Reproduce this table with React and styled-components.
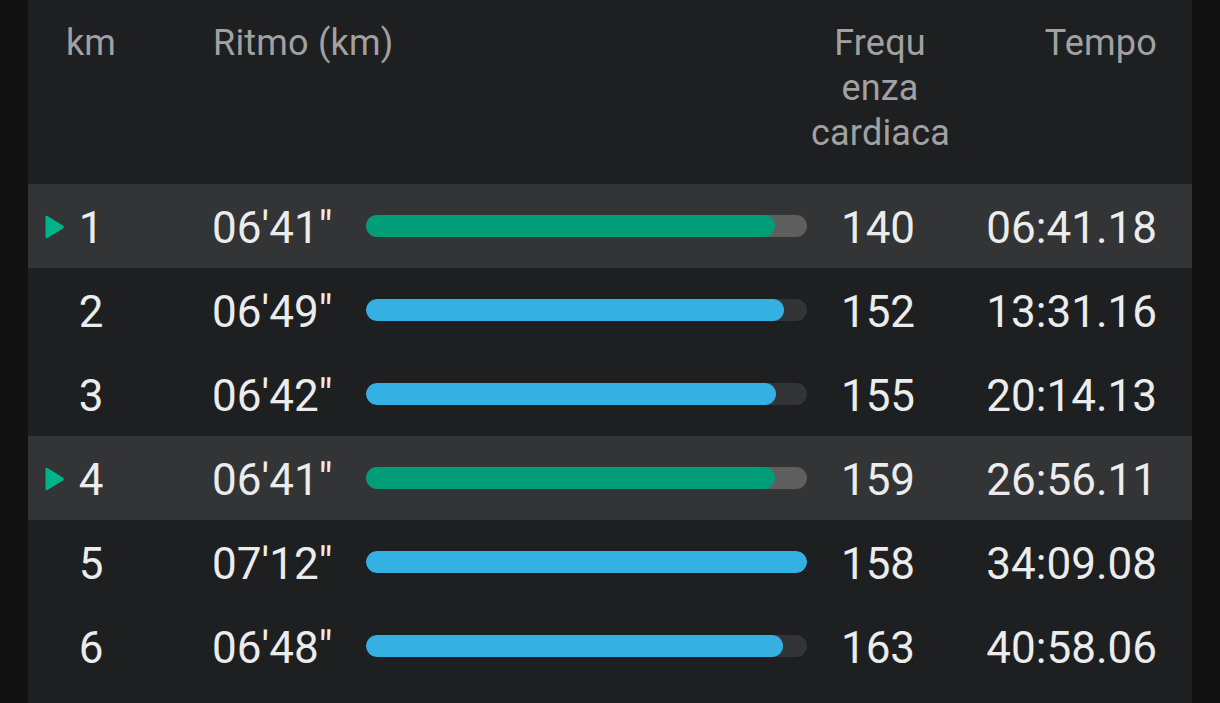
import styled, { createGlobalStyle } from 'styled-components';

const GlobalStyle = createGlobalStyle`
  html, body {
    margin: 0;
    padding: 0;
    background: #121212;
    height: 100%;
    overflow: hidden;
  }
  body {
    font-family: Roboto, "Noto Sans", sans-serif;
  }
`;

const Panel = styled.div`
  margin: 0 28px;
  min-height: 100vh;
  background: #1e1f21;
`;

const COLUMNS = '34px 58px 246px 441px 142px 1fr';

const HeaderRow = styled.div`
  display: grid;
  grid-template-columns: ${COLUMNS};
  height: 184px;
  box-sizing: border-box;
  padding: 21px 35px 0 0;
  color: #a1a1a1;
  font-size: 36px;
  line-height: 45px;
  letter-spacing: 0.2px;
`;

const HeadCell = styled.div`
  grid-column: ${p => p.$col};
  text-align: ${p => p.$align || 'left'};
  padding-left: ${p => p.$pad || 0}px;
  white-space: nowrap;
`;

const Row = styled.div`
  display: grid;
  grid-template-columns: ${COLUMNS};
  align-items: center;
  height: 84px;
  padding-right: 35px;
  background: ${p => (p.$active ? '#333436' : 'transparent')};
  color: #ececec;
  font-size: 44px;
`;

const Marker = styled.div`
  display: flex;
  align-items: center;
  padding-left: 17px;
  padding-top: 2px;
  overflow: visible;

  svg {
    display: block;
    flex: 0 0 19px;
    width: 19px;
    height: 24px;
  }
`;

const Km = styled.div`
  text-align: center;
  padding-top: 4px;
`;

const Pace = styled.div`
  padding-left: 92px;
  padding-top: 4px;
`;

const Track = styled.div`
  height: 22px;
  border-radius: 11px;
  background: ${p => (p.$active ? '#5f5f5f' : '#333437')};
  overflow: hidden;
`;

const Fill = styled.div`
  height: 100%;
  border-radius: 11px;
  background: ${p => (p.$active ? '#009e78' : '#35b0e2')};
`;

const Hr = styled.div`
  text-align: center;
  padding-top: 4px;
`;

const Tempo = styled.div`
  text-align: right;
  padding-top: 4px;
`;

const laps = [
  { km: 1, pace: "06'41\"", sec: 401, hr: 140, time: '06:41.18', active: true },
  { km: 2, pace: "06'49\"", sec: 409, hr: 152, time: '13:31.16' },
  { km: 3, pace: "06'42\"", sec: 402, hr: 155, time: '20:14.13' },
  { km: 4, pace: "06'41\"", sec: 401, hr: 159, time: '26:56.11', active: true },
  { km: 5, pace: "07'12\"", sec: 432, hr: 158, time: '34:09.08' },
  { km: 6, pace: "06'48\"", sec: 408, hr: 163, time: '40:58.06' },
];

const maxSec = Math.max(...laps.map(l => l.sec));

function Arrow() {
  return (
    <svg viewBox="0 0 19 24">
      <path
        d="M0.5 2.2 Q0.5 0 2.4 1.1 L18 10.5 Q19.5 12 18 13.5 L2.4 22.9 Q0.5 24 0.5 21.8 Z"
        fill="#00b38a"
      />
    </svg>
  );
}

export default function App() {
  return (
    <>
      <GlobalStyle />
      <Panel>
        <HeaderRow>
          <HeadCell $col="1 / 3" $align="center" $pad={34}>km</HeadCell>
          <HeadCell $col="3 / 5" $pad={93}>Ritmo (km)</HeadCell>
          <HeadCell $col="5" $align="center" $pad={4}>
            Frequ<br />enza<br />cardiaca
          </HeadCell>
          <HeadCell $col="6" $align="right">Tempo</HeadCell>
        </HeaderRow>
        {laps.map(lap => (
          <Row key={lap.km} $active={lap.active}>
            <Marker>{lap.active && <Arrow />}</Marker>
            <Km>{lap.km}</Km>
            <Pace>{lap.pace}</Pace>
            <Track $active={lap.active}>
              <Fill $active={lap.active} style={{ width: `${(lap.sec / maxSec) * 100}%` }} />
            </Track>
            <Hr>{lap.hr}</Hr>
            <Tempo>{lap.time}</Tempo>
          </Row>
        ))}
      </Panel>
    </>
  );
}
